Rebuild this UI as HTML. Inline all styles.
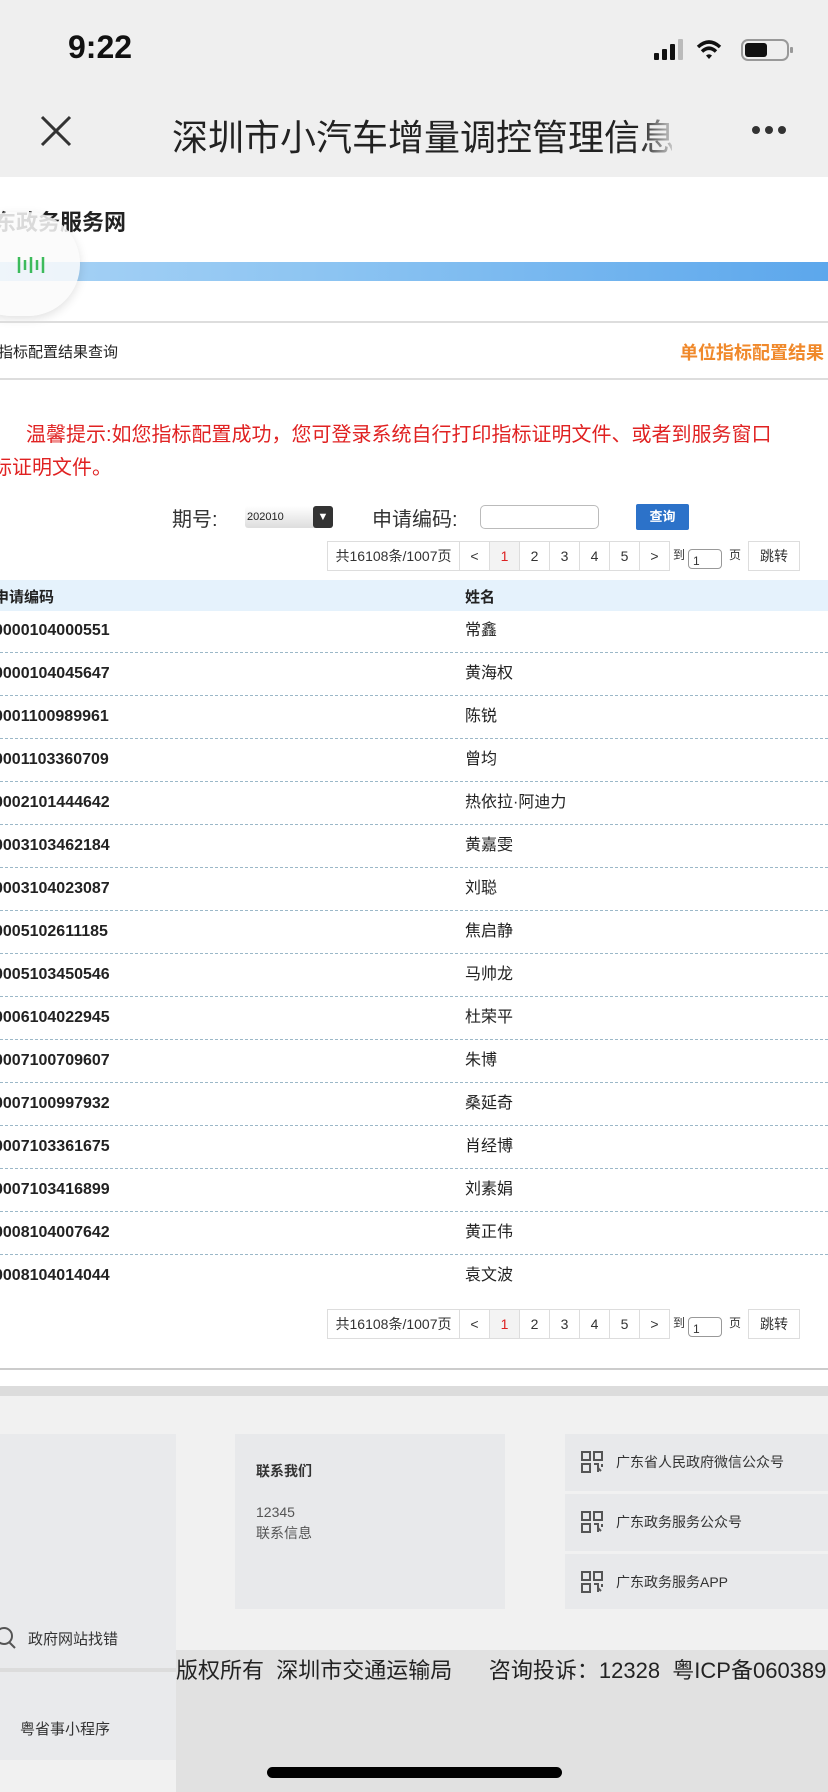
<!DOCTYPE html>
<html><head><meta charset="utf-8"><style>
*{margin:0;padding:0;box-sizing:border-box}
body{width:828px;height:1792px;overflow:hidden;position:relative;background:#fff;font-family:"Liberation Sans","Noto Sans CJK SC",sans-serif;color:#222}
.a{position:absolute;white-space:nowrap}
.pg{position:absolute;height:30px;display:flex;font-size:14px;color:#333}
.pg div{border:1px solid #ddd;height:30px;line-height:28px;text-align:center;margin-left:-1px;background:#fff}
.row{position:absolute;left:0;width:828px;height:43px;border-bottom:1px dashed #9bb8c8;font-size:16px;line-height:42px}
.row span{position:absolute;top:0}
</style></head><body>
<div class="a" style="left:0;top:0;width:828px;height:177px;background:#efefef"></div>
<div class="a" style="left:68px;top:29px;font-size:32px;font-weight:bold;color:#111">9:22</div>
<svg class="a" style="left:652px;top:38px" width="142" height="24" viewBox="0 0 142 24">
<rect x="2" y="15" width="5" height="7" rx="1" fill="#111"/><rect x="10" y="11" width="5" height="11" rx="1" fill="#111"/><rect x="18" y="6" width="5" height="16" rx="1" fill="#111"/><rect x="26" y="1" width="5" height="21" rx="1" fill="#bbb"/>
<path d="M46 9 Q57 -1 68 9" stroke="#111" stroke-width="3.5" fill="none"/><path d="M50 13.5 Q57 7 64 13.5" stroke="#111" stroke-width="3.5" fill="none"/><path d="M54 17.5 L57 21 L60 17.5 Q57 15 54 17.5Z" fill="#111"/>
<rect x="90" y="2" width="46" height="20" rx="6" stroke="#999" stroke-width="2" fill="none"/><rect x="93" y="5" width="22" height="14" rx="3" fill="#111"/><rect x="138" y="9" width="3" height="6" rx="1" fill="#999"/></svg>
<svg class="a" style="left:40px;top:115px" width="32" height="32"><path d="M2 2L30 30M30 2L2 30" stroke="#333" stroke-width="3"/></svg>
<div class="a" style="left:172px;top:109px;font-size:36px;color:#222;width:500px;overflow:hidden">深圳市小汽车增量调控管理信息系</div>
<div class="a" style="left:640px;top:105px;width:40px;height:50px;background:linear-gradient(90deg,rgba(239,239,239,0),#efefef)"></div>
<div class="a" style="left:752px;top:126px;display:flex;gap:5px"><i style="width:8px;height:8px;border-radius:50%;background:#333"></i><i style="width:8px;height:8px;border-radius:50%;background:#333"></i><i style="width:8px;height:8px;border-radius:50%;background:#333"></i></div>

<div class="a" style="left:-6px;top:205px;font-size:22px;font-weight:bold;color:#222">东政务服务网</div>
<div class="a" style="left:0;top:262px;width:828px;height:19px;background:linear-gradient(90deg,#a9d3f5,#8cc4f2 40%,#5ca7ec)"></div>
<div class="a" style="left:-40px;top:212px;width:120px;height:104px;border-radius:52px;background:rgba(250,250,250,.85);box-shadow:0 3px 10px rgba(0,0,0,.12)"></div>
<svg class="a" style="left:17px;top:255px" width="30" height="20"><g stroke="#3dbb5c" stroke-width="2.5"><path d="M2 2v16M8 5v10M14 2v16M20 5v10M26 2v16"/></g></svg>
<div class="a" style="left:0;top:321px;width:828px;height:2px;background:#ddd"></div>
<div class="a" style="left:-2px;top:341px;font-size:15px;color:#222">指标配置结果查询</div>
<div class="a" style="left:680px;top:339px;font-size:18px;font-weight:bold;color:#f0892b">单位指标配置结果</div>
<div class="a" style="left:0;top:378px;width:828px;height:2px;background:#ddd"></div>

<div class="a" style="left:26px;top:418px;font-size:20px;color:#e02222">温馨提示:如您指标配置成功，您可登录系统自行打印指标证明文件、或者到服务窗口</div>
<div class="a" style="left:-8px;top:451px;font-size:20px;color:#e02222">标证明文件。</div>

<div class="a" style="left:172px;top:503px;font-size:20px;color:#333">期号:</div>
<div class="a" style="left:245px;top:506px;width:88px;height:22px;border-radius:3px;background:linear-gradient(#fff,#ddd);font-size:11px;line-height:22px;padding-left:2px;color:#222">202010</div>
<div class="a" style="left:313px;top:506px;width:20px;height:22px;border-radius:3px;background:#333;color:#fff;font-size:11px;text-align:center;line-height:22px">▼</div>
<div class="a" style="left:372px;top:503px;font-size:20px;color:#333">申请编码:</div>
<div class="a" style="left:480px;top:505px;width:119px;height:24px;border:1px solid #bbb;border-radius:5px"></div>
<div class="a" style="left:636px;top:504px;width:53px;height:26px;background:#2c72c9;border-radius:2px;color:#fff;font-size:13px;font-weight:bold;text-align:center;line-height:26px">查询</div>

<div class="pg" style="left:328px;top:541px"><div style="width:133px">共16108条/1007页</div><div style="width:31px">&lt;</div><div style="width:31px;color:#d22;background:#f3f3f3">1</div><div style="width:31px">2</div><div style="width:31px">3</div><div style="width:31px">4</div><div style="width:31px">5</div><div style="width:31px">&gt;</div><div style="border:none;width:20px;font-size:12px;background:none">到</div><div style="border:1px solid #999;border-radius:4px;width:34px;height:20px;margin-top:8px;line-height:22px;text-align:left;padding-left:4px;font-size:12px">1</div><div style="border:none;width:28px;font-size:12px;background:none">页</div><div style="width:52px">跳转</div></div>

<div class="a" style="left:0;top:580px;width:828px;height:31px;background:#e5f2fc"></div>
<div class="a" style="left:-6px;top:586px;font-size:15px;font-weight:bold">申请编码</div>
<div class="a" style="left:465px;top:586px;font-size:15px;font-weight:bold">姓名</div>

<div class="row" style="top:610px"><span style="left:-6px;font-weight:bold">0000104000551</span><span style="left:465px">常鑫</span></div>
<div class="row" style="top:653px"><span style="left:-6px;font-weight:bold">0000104045647</span><span style="left:465px">黄海权</span></div>
<div class="row" style="top:696px"><span style="left:-6px;font-weight:bold">0001100989961</span><span style="left:465px">陈锐</span></div>
<div class="row" style="top:739px"><span style="left:-6px;font-weight:bold">0001103360709</span><span style="left:465px">曾均</span></div>
<div class="row" style="top:782px"><span style="left:-6px;font-weight:bold">0002101444642</span><span style="left:465px">热依拉·阿迪力</span></div>
<div class="row" style="top:825px"><span style="left:-6px;font-weight:bold">0003103462184</span><span style="left:465px">黄嘉雯</span></div>
<div class="row" style="top:868px"><span style="left:-6px;font-weight:bold">0003104023087</span><span style="left:465px">刘聪</span></div>
<div class="row" style="top:911px"><span style="left:-6px;font-weight:bold">0005102611185</span><span style="left:465px">焦启静</span></div>
<div class="row" style="top:954px"><span style="left:-6px;font-weight:bold">0005103450546</span><span style="left:465px">马帅龙</span></div>
<div class="row" style="top:997px"><span style="left:-6px;font-weight:bold">0006104022945</span><span style="left:465px">杜荣平</span></div>
<div class="row" style="top:1040px"><span style="left:-6px;font-weight:bold">0007100709607</span><span style="left:465px">朱博</span></div>
<div class="row" style="top:1083px"><span style="left:-6px;font-weight:bold">0007100997932</span><span style="left:465px">桑延奇</span></div>
<div class="row" style="top:1126px"><span style="left:-6px;font-weight:bold">0007103361675</span><span style="left:465px">肖经博</span></div>
<div class="row" style="top:1169px"><span style="left:-6px;font-weight:bold">0007103416899</span><span style="left:465px">刘素娟</span></div>
<div class="row" style="top:1212px"><span style="left:-6px;font-weight:bold">0008104007642</span><span style="left:465px">黄正伟</span></div>
<div class="row" style="top:1255px;border-bottom:none"><span style="left:-6px;font-weight:bold">0008104014044</span><span style="left:465px">袁文波</span></div>

<div class="pg" style="left:328px;top:1309px"><div style="width:133px">共16108条/1007页</div><div style="width:31px">&lt;</div><div style="width:31px;color:#d22;background:#f3f3f3">1</div><div style="width:31px">2</div><div style="width:31px">3</div><div style="width:31px">4</div><div style="width:31px">5</div><div style="width:31px">&gt;</div><div style="border:none;width:20px;font-size:12px;background:none">到</div><div style="border:1px solid #999;border-radius:4px;width:34px;height:20px;margin-top:8px;line-height:22px;text-align:left;padding-left:4px;font-size:12px">1</div><div style="border:none;width:28px;font-size:12px;background:none">页</div><div style="width:52px">跳转</div></div>
<div class="a" style="left:0;top:1368px;width:828px;height:2px;background:#ccc"></div>

<div class="a" style="left:0;top:1386px;width:828px;height:406px;background:#f1f1f1"></div>
<div class="a" style="left:0;top:1386px;width:828px;height:10px;background:#dcdcdc"></div>
<div class="a" style="left:0;top:1434px;width:176px;height:326px;background:#e9eaec"></div>
<div class="a" style="left:0;top:1668px;width:176px;height:4px;background:#dcdcdc"></div>
<svg class="a" style="left:0;top:1624px" width="20" height="28"><circle cx="4" cy="12" r="8" stroke="#555" stroke-width="2" fill="none"/><path d="M9 18l6 6" stroke="#555" stroke-width="2"/></svg>
<div class="a" style="left:28px;top:1628px;font-size:15px;color:#333">政府网站找错</div>
<div class="a" style="left:20px;top:1718px;font-size:15px;color:#333">粤省事小程序</div>
<div class="a" style="left:235px;top:1434px;width:270px;height:175px;background:#e8e9eb"></div>
<div class="a" style="left:256px;top:1461px;font-size:14px;font-weight:bold;color:#333">联系我们</div>
<div class="a" style="left:256px;top:1502px;font-size:14px;color:#555;line-height:21px">12345<br>联系信息</div>
<div class="a" style="left:565px;top:1434px;width:263px;height:57px;background:#e8e9eb"></div>
<div class="a" style="left:565px;top:1494px;width:263px;height:57px;background:#e8e9eb"></div>
<div class="a" style="left:565px;top:1554px;width:263px;height:55px;background:#e8e9eb"></div>
<svg class="a" style="left:581px;top:1451px" width="22" height="22"><g stroke="#555" stroke-width="2" fill="none"><rect x="1" y="1" width="8" height="8"/><rect x="13" y="1" width="8" height="8"/><rect x="1" y="13" width="8" height="8"/><path d="M13 13h4v8M21 13v3M20 20l-3-3"/></g></svg>
<svg class="a" style="left:581px;top:1511px" width="22" height="22"><g stroke="#555" stroke-width="2" fill="none"><rect x="1" y="1" width="8" height="8"/><rect x="13" y="1" width="8" height="8"/><rect x="1" y="13" width="8" height="8"/><path d="M13 13h4v8M21 13v3M20 20l-3-3"/></g></svg>
<svg class="a" style="left:581px;top:1571px" width="22" height="22"><g stroke="#555" stroke-width="2" fill="none"><rect x="1" y="1" width="8" height="8"/><rect x="13" y="1" width="8" height="8"/><rect x="1" y="13" width="8" height="8"/><path d="M13 13h4v8M21 13v3M20 20l-3-3"/></g></svg>
<div class="a" style="left:616px;top:1452px;font-size:14px;color:#333">广东省人民政府微信公众号</div>
<div class="a" style="left:616px;top:1512px;font-size:14px;color:#333">广东政务服务公众号</div>
<div class="a" style="left:616px;top:1572px;font-size:14px;color:#333">广东政务服务APP</div>

<div class="a" style="left:176px;top:1650px;width:652px;height:142px;background:#e1e1e1"></div>
<div class="a" style="left:176px;top:1653px;font-size:22px;color:#222">版权所有&nbsp;&nbsp;深圳市交通运输局&nbsp;&nbsp;&nbsp;&nbsp;&nbsp;&nbsp;咨询投诉：12328&nbsp;&nbsp;粤ICP备060389</div>
<div class="a" style="left:267px;top:1767px;width:295px;height:11px;border-radius:6px;background:#000"></div>
</body></html>
